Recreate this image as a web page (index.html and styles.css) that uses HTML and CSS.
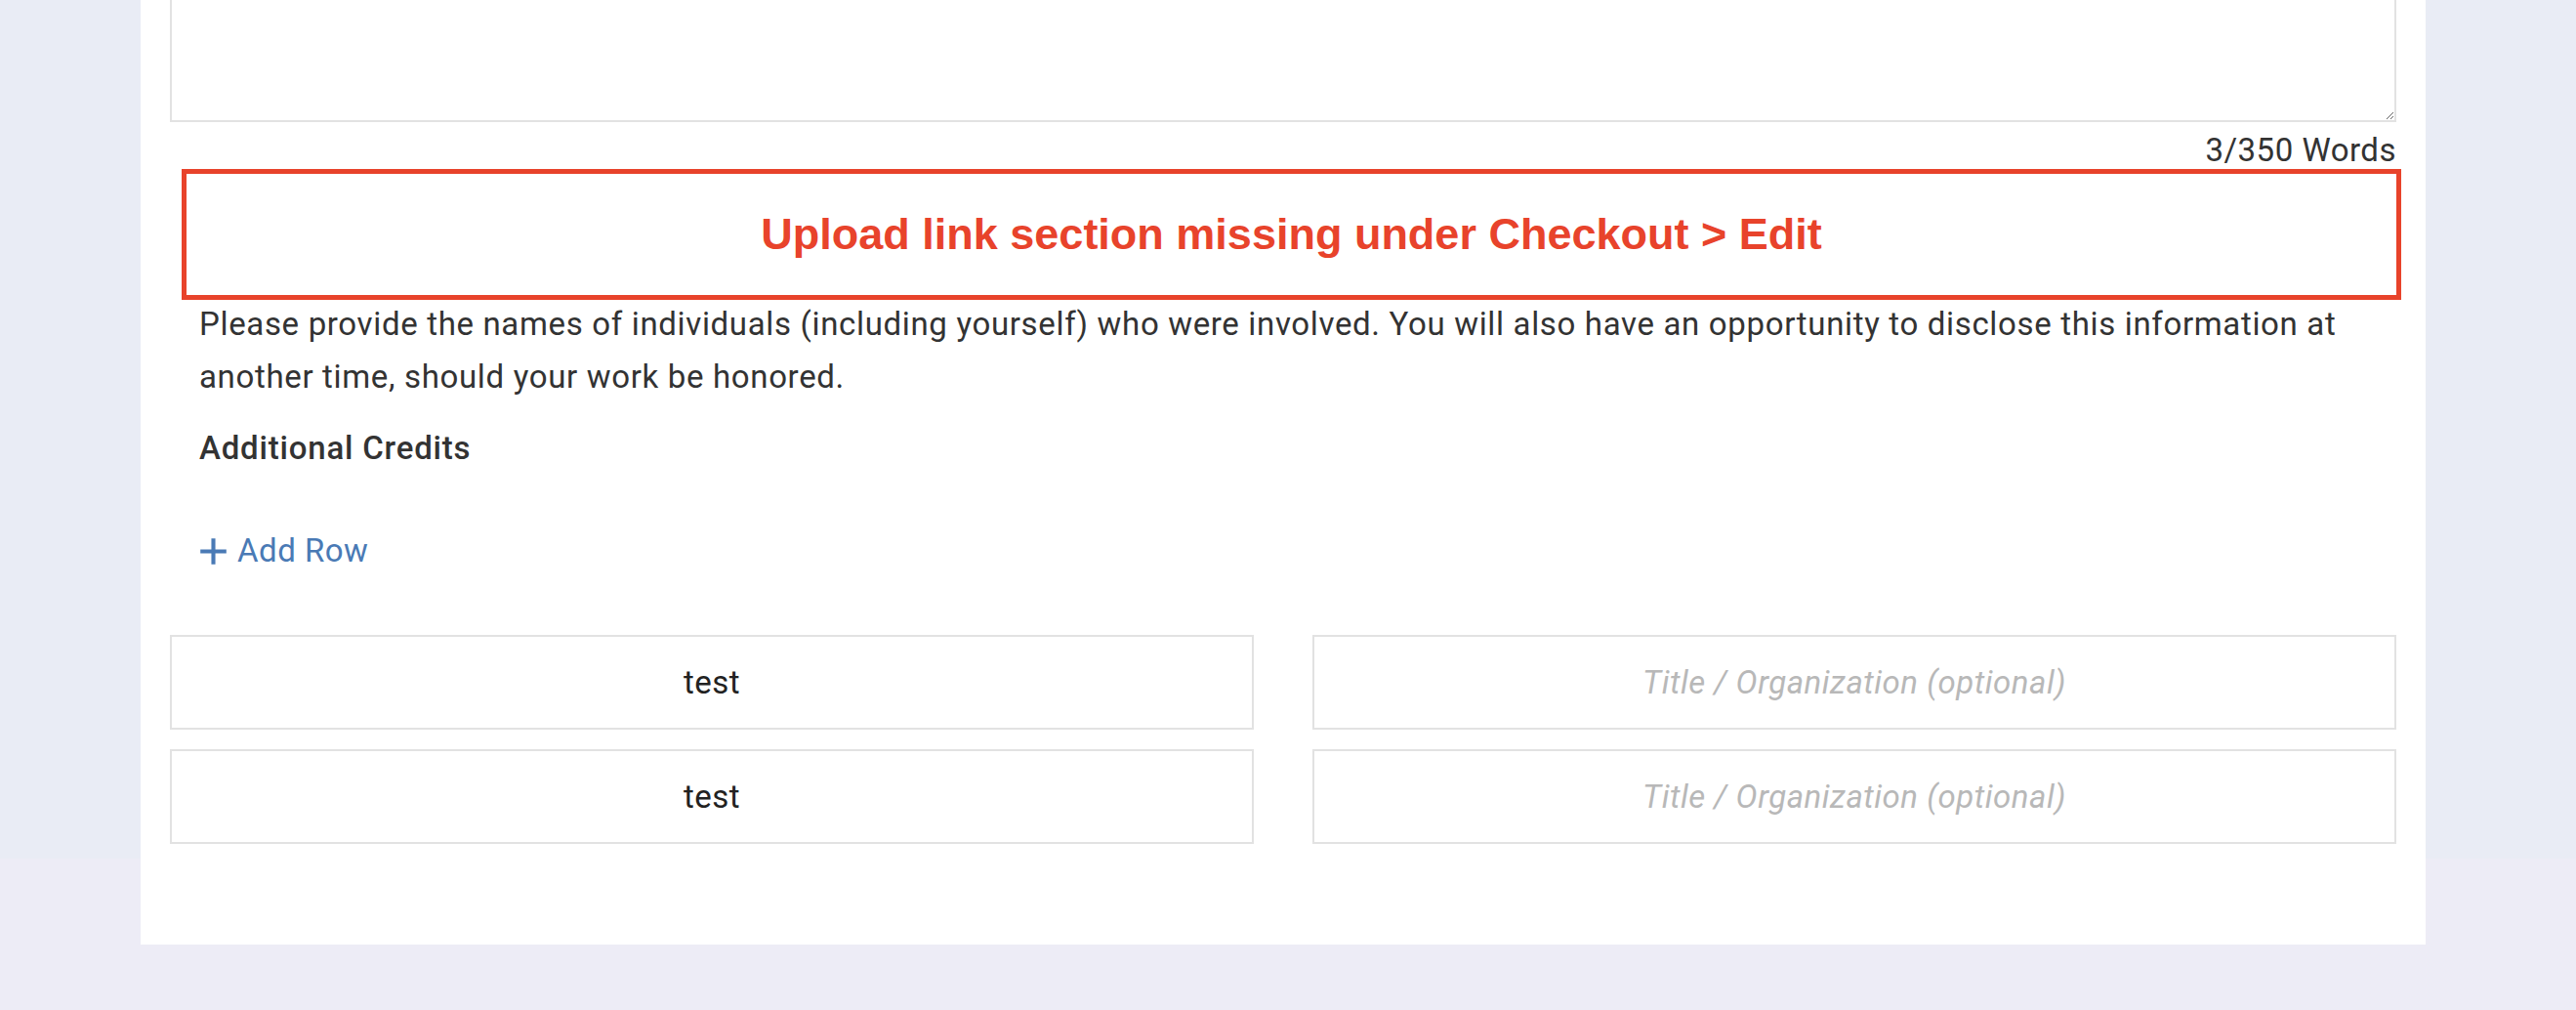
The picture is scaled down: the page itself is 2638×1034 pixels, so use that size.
FILE: index.html
```html
<!DOCTYPE html>
<html lang="en">
<head>
    <meta charset="UTF-8">
    <meta name="viewport" content="width=device-width, initial-scale=1.0">
    <title>Submission - Credits</title>
    <link rel="stylesheet" href="styles.css">
</head>
<body>

    <main class="card">

        <!-- Essay field (scrolled: only its bottom is visible) -->
        <div class="essay-field">
            <textarea class="essay" aria-label="Description"></textarea>
            <div class="word-count">3/350 Words</div>
        </div>

        <!-- Reviewer note -->
        <div class="review-note">Upload link section missing under Checkout &gt; Edit</div>

        <p class="help">Please provide the names of individuals (including yourself) who were involved. You will also have an opportunity to disclose this information at another time, should your work be honored.</p>

        <h4 class="field-label">Additional Credits</h4>

        <button type="button" class="add-row">
            <svg class="add-icon" viewBox="0 0 24 24" aria-hidden="true">
                <path d="M12 1v22M1 12h22" />
            </svg>
            Add Row
        </button>

        <!-- Credit rows -->
        <div class="credits">
            <input type="text" class="credit-input" value="test">
            <input type="text" class="credit-input" placeholder="Title / Organization (optional)">
            <input type="text" class="credit-input" value="test">
            <input type="text" class="credit-input" placeholder="Title / Organization (optional)">
        </div>

    </main>

</body>
</html>
```

FILE: styles.css
```css
html {
    background: linear-gradient(#e9ecf5 879px, #edecf6 879px);
    min-height: 100%;
}
body {
    margin: 0;
    font-family: Roboto, "Liberation Sans", sans-serif;
    font-size: 33px;
    letter-spacing: 0.5px;
    color: #333;
}
.card {
    width: 2340px;
    margin: -175px 0 0 144px;
    padding: 0 30px 103px;
    box-sizing: border-box;
    background: #fff;
}
.essay {
    display: block;
    width: 100%;
    height: 300px;
    box-sizing: border-box;
    border: 2px solid #e2e2e2;
    border-radius: 0;
    padding: 20px 30px;
    font: inherit;
    resize: vertical;
}
.word-count {
    margin-top: 10px;
    line-height: 38px;
    text-align: right;
    color: #333;
}
.review-note {
    display: flex;
    align-items: center;
    justify-content: center;
    height: 134px;
    box-sizing: border-box;
    margin: 0 -5px -2px 12px;
    border: 5px solid #e8432b;
    font-family: "Liberation Sans", Arial, sans-serif;
    font-weight: bold;
    font-size: 45px;
    letter-spacing: 0;
    color: #e8432b;
}
.help {
    margin: 0;
    padding: 0 30px;
    line-height: 54px;
    letter-spacing: 0.66px;
}
.field-label {
    margin: 19px 0 0;
    padding: 0 30px;
    font-size: 33px;
    font-weight: 500;
    line-height: 54px;
    letter-spacing: 0.8px;
}
.add-row {
    display: flex;
    align-items: center;
    gap: 10px;
    margin: 51px 0 0 30px;
    padding: 0;
    border: none;
    background: none;
    font: inherit;
    letter-spacing: inherit;
    line-height: 54px;
    color: #4a7ab5;
    cursor: pointer;
}
.add-icon {
    width: 29px;
    height: 29px;
    fill: none;
    stroke: #4a7ab5;
    stroke-width: 3.4;
}
.credits {
    display: grid;
    grid-template-columns: 1fr 1fr;
    gap: 20px 60px;
    margin-top: 59px;
}
.credit-input {
    height: 97px;
    box-sizing: border-box;
    border: 2px solid #e2e2e2;
    border-radius: 0;
    padding: 0 20px;
    font: inherit;
    letter-spacing: inherit;
    color: #222;
    text-align: center;
}
.credit-input::placeholder {
    color: #b8b8b8;
    font-style: italic;
}
```
